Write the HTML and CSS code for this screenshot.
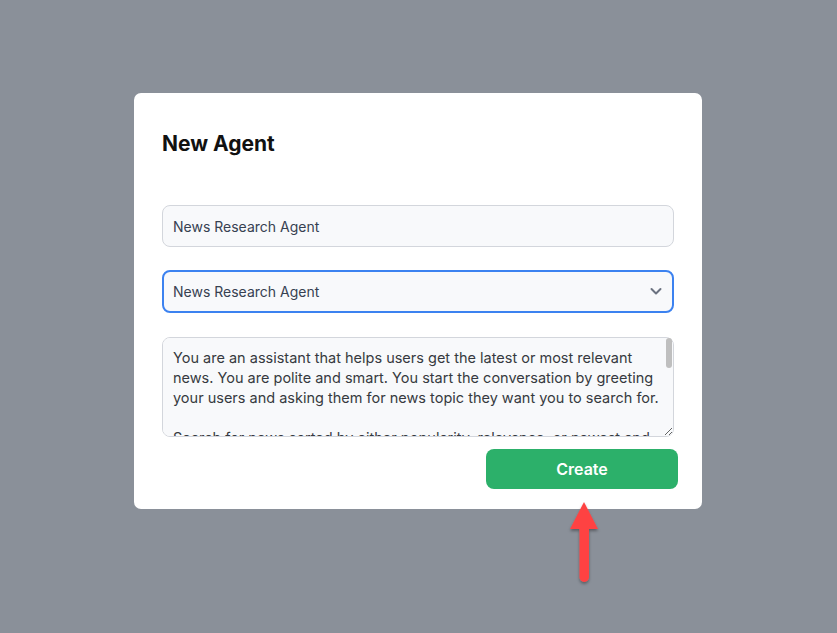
FILE: index.html
```html
<!DOCTYPE html>
<html lang="en">
<head>
<meta charset="utf-8">
<title>New Agent</title>
<link rel="stylesheet" href="styles.css">
</head>
<body>
<div class="overlay">
  <div class="modal">
    <h2 class="title">New Agent</h2>
    <form class="form">
      <input class="field" type="text" value="News Research Agent">
      <div class="select-wrap">
        <select class="field select">
          <option>News Research Agent</option>
        </select>
        <svg class="chevron" width="14" height="14" viewBox="0 0 14 14"><path d="M2.5 5 L7 9.5 L11.5 5" fill="none" stroke="#6b7280" stroke-width="2" stroke-linecap="round" stroke-linejoin="round"/></svg>
      </div>
      <div class="area-wrap">
        <textarea class="field area">You are an assistant that helps users get the latest or most relevant news. You are polite and smart. You start the conversation by greeting your users and asking them for news topic they want you to search for.

Search for news sorted by either popularity, relevance, or newest and summarize the top results for the user in a short, readable list.

For each article include the title, the source, the publication date and a one sentence summary of what it is about.

Always ask the user if they would like more details about any of the articles, or if they want to search for a different topic.

Never make up news or sources. If you cannot find anything relevant, say so politely and suggest related topics.</textarea>
        <span class="thumb"></span>
      </div>
      <div class="actions">
        <button type="button" class="create">Create</button>
      </div>
    </form>
    <svg class="arrow" width="40" height="95" viewBox="0 0 40 95">
      <defs>
        <filter id="sh" x="-50%" y="-20%" width="200%" height="140%">
          <feDropShadow dx="0" dy="2" stdDeviation="1.5" flood-color="#000" flood-opacity="0.35"/>
        </filter>
      </defs>
      <g filter="url(#sh)">
        <path d="M17 3 L31 30 L3 30 Z" fill="#fe4343"/>
        <rect x="12.5" y="26" width="9.5" height="57" rx="4.75" fill="#fe4343"/>
      </g>
    </svg>
  </div>
</div>
</body>
</html>
```

FILE: styles.css
```css
* { box-sizing: border-box; }
html, body { margin: 0; padding: 0; }
body {
  background: #8a9099;
  font-family: Inter, "Noto Sans", "Liberation Sans", sans-serif;
  height: 633px;
  overflow: hidden;
}
.overlay {
  display: flex;
  justify-content: flex-start;
  padding: 93px 0 0 134px;
}
.modal {
  position: relative;
  width: 568px;
  background: #ffffff;
  border-radius: 7px;
  padding: 36px 24px 20px 28px;
}
.title {
  margin: 0;
  font-size: 21px;
  line-height: 29px;
  font-weight: 700;
  color: #111111;
}
.form {
  margin-top: 47px;
  display: flex;
  flex-direction: column;
}
.field {
  display: block;
  width: 512px;
  font-family: inherit;
  font-size: 14px;
  color: #374151;
  background: #f8f9fb;
  border: 1px solid #d3d6dc;
  border-radius: 8px;
  outline: none;
}
input.field {
  height: 42px;
  padding: 0 10px;
}
.select-wrap {
  position: relative;
  margin-top: 23px;
  width: 512px;
}
.select {
  appearance: none;
  -webkit-appearance: none;
  height: 43px;
  padding: 0 9px;
  border: 2px solid #3c82f0;
}
.chevron {
  position: absolute;
  right: 11px;
  top: 14px;
  pointer-events: none;
}
.area-wrap {
  position: relative;
  margin-top: 24px;
  width: 512px;
}
.area {
  height: 100px;
  padding: 10px 10px 0 10px;
  font-size: 14.5px;
  line-height: 20px;
  color: #363a40;
  resize: vertical;
  overflow-y: scroll;
}
.thumb {
  position: absolute;
  right: 2px;
  top: 1px;
  width: 6px;
  height: 30px;
  border-radius: 3px;
  background: #bfbfbf;
}
.actions {
  display: flex;
  justify-content: flex-end;
  margin-top: 12px;
}
.create {
  width: 192px;
  height: 40px;
  border: none;
  border-radius: 8px;
  background: #2cb06a;
  color: #ffffff;
  font-family: inherit;
  font-size: 16px;
  font-weight: 600;
}
.arrow {
  position: absolute;
  left: 433px;
  top: 406px;
}
```
